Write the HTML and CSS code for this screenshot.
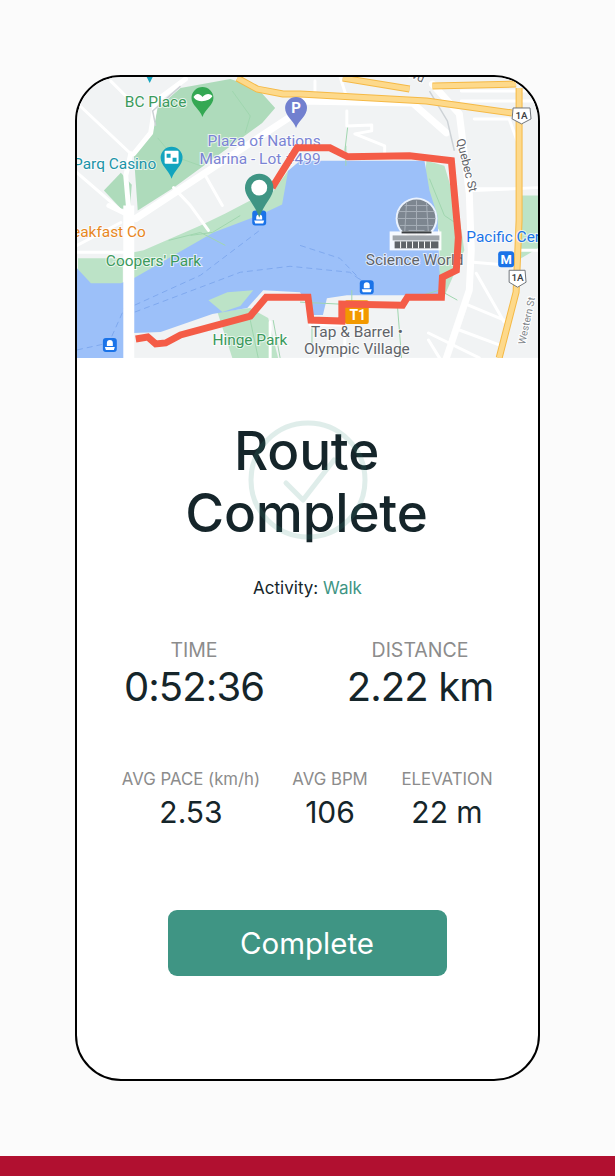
FILE: index.html
```html
<!DOCTYPE html>
<html>
<head>
    <link rel="stylesheet" href="styles.css">
</head>
<body>
<div class="page">
    <div class="phone">
        <svg class="map" viewBox="76 76 463 282" xmlns="http://www.w3.org/2000/svg">
            <rect x="76" y="76" width="463" height="282" fill="#f1f3f4"/>

            <!-- parks -->
            <g fill="#aedbbb">
                <path d="M133 153 153 127 157 107 180 87 230 78 257 87 275 107 262 122 173 187 137 210Z"/>
                <path d="M103 190 120 172 131 184 129 209 120 208Z"/>
            </g>
            <g fill="#bce3c7">
                <path d="M133 252 143 250 200 225 225 213 250 200 270 195 288 170 300 175 300 210 240 232 133 280Z"/>
                <path d="M77 258 122 258 122 284 90 284 77 270Z"/>
                <path d="M217 312 232 358 278 358 268 318 250 308Z"/>
                <path d="M427 160 445 165 460 215 465 250 445 296 420 298 440 270 440 230 426 210 424 190Z"/>
                <path d="M522 195 539 195 539 248 522 258Z"/>
            </g>

            <!-- water -->
            <path fill="#9cc0f9" d="M76 268 90 283 120 283 133 278 213 232 250 218 265 212 282 204 288 170 300 160 425 160 430 190 438 215 440 268 441 295 405 295 347 295 327 298 323 315 313 315 300 292 263 290 247 308 212 314 160 332 133 333 130 358 76 358Z"/>
            <path fill="#bce3c7" d="M208 300 227 292 253 290 240 306 222 312Z"/>
            <g fill="none" stroke="#7fa8ee" stroke-width="1" stroke-dasharray="6 4">
                <path d="M134 305 200 275 262 228"/>
                <path d="M134 312 240 272 290 266 350 272 368 285"/>
                <path d="M300 245 340 258 366 285"/>
                <path d="M76 350 108 343 125 305"/>
            </g>

            <!-- small park paths -->
            <g fill="none" stroke="#9fd6ae" stroke-width="1">
                <path d="M232 90 250 115 245 132"/>
                <path d="M157 137 172 155 200 165"/>
                <path d="M190 235 212 232 240 215"/>
                <path d="M168 240 200 232 225 245"/>
                <path d="M346 145 346 165M312 300 312 345"/>
                <path d="M430 178 445 215 460 225"/>
                <path d="M352 290 352 302M420 296 440 290 458 300"/>
                <path d="M300 302 340 304M398 308 402 358"/>
                <path d="M250 320 258 358M273 320 280 358"/>
                <path d="M348 125 345 150"/>
            </g>

            <!-- streets -->
            <g fill="none" stroke="#fff" stroke-linecap="round" stroke-linejoin="round">
                <g stroke-width="3">
                    <path d="M77 103 130 153M110 80 130 100M76 172 126 215"/>
                    <path d="M173 187 190 205 208 230M205 175 222 205"/>
                    <path d="M76 252 122 252M76 245 120 222"/>
                    <path d="M347 110 347 125M347 125 372 124 372 130 355 133 385 145 385 155"/>
                    <path d="M462 90 539 90M462 100 539 100M475 118 510 118 518 140M470 188 520 188M474 190 539 187"/>
                    <path d="M474 262 510 265M477 273 505 322M469 305 510 322M460 330 500 345M429 340 440 358"/>
                    <path d="M429 333 480 358M345 308 345 358M310 325 345 325M270 322 270 358"/>
                    <path d="M315 100 315 80M340 75 348 100M520 250 539 250"/>
                </g>
                <g stroke-width="5">
                    <path d="M133 153 150 132 155 100 185 78"/>
                    <path d="M130 153 125 175 128 210"/>
                </g>
                <g stroke-width="7">
                    <path d="M135 218 290 116 300 100 413 102 447 132"/>
                    <path d="M433 83 460 113 470 193 472 250 470 290 447 358"/>
                </g>
                <path stroke-width="11" stroke-linecap="butt" d="M128 205 128 358"/>
                <path stroke-width="5" d="M108 205 135 218"/>
            </g>
            <path fill="none" stroke="#cdd2d6" stroke-width="1.500" d="M155 125 152 110 180 85M430 90 448 120 455 150"/>

            <!-- highway -->
            <g fill="none" stroke-linejoin="round">
                <g stroke="#f5b945" stroke-width="7">
                    <path d="M237 77 257 88 283 93 300 93 427 100 513 112"/>
                    <path d="M343 77 410 88M433 85 517 83"/>
                    <path d="M520 87 520 220 517 292 500 358"/>
                </g>
                <g stroke="#fdd98b" stroke-width="5">
                    <path d="M237 77 257 88 283 93 300 93 427 100 513 112"/>
                    <path d="M343 77 410 88M433 85 517 83"/>
                    <path d="M520 87 520 220 517 292 500 358"/>
                </g>
            </g>

            <!-- shields -->
            <g class="shield">
                <path d="M514 107 531 107 532 118 522.500 123 513 118Z" fill="#fff" stroke="#70757a"/>
                <text x="522.500" y="118">1A</text>
                <path d="M510 270 526 270 527 282 518.500 287 510 282Z" fill="#fff" stroke="#70757a"/>
                <text x="518.500" y="281">1A</text>
            </g>

            <!-- science world -->
            <circle cx="417" cy="218" r="21" fill="#fff" opacity="0.8"/>
            <circle cx="417" cy="218" r="19" fill="#7d8690"/>
            <g stroke="#a7afb8" stroke-width="1" fill="none">
                <path d="M399 211 435 211M398 218 436 218M400 225 434 225M405 205 429 205M409 230 425 230"/>
                <path d="M407 202 405 234M417 200 417 236M427 202 429 234"/>
            </g>
            <rect x="390" y="231" width="52" height="19" fill="#fff" opacity="0.9"/>
            <rect x="402" y="231" width="30" height="2" fill="#3c4043"/>
            <rect x="393" y="235" width="47" height="5" fill="#a0a6ac"/>
            <rect x="395" y="241" width="44" height="7" fill="#5f6368"/>
            <g stroke="#fff" stroke-width="1">
                <path d="M401 241 401 248M407 241 407 248M413 241 413 248M419 241 419 248M425 241 425 248M431 241 431 248"/>
            </g>

            <!-- labels -->
            <g class="label">
                <text class="park" x="124" y="106">BC Place</text>
                <text class="lilac" x="207" y="145">Plaza of Nations</text>
                <text class="lilac" x="199" y="163">Marina - Lot #499</text>
                <text class="cyan" x="72" y="168">Parq Casino</text>
                <text class="food" x="71" y="237">eakfast Co</text>
                <text class="park" x="105" y="266">Coopers' Park</text>
                <text class="grey" x="366" y="265">Science World</text>
                <text class="metro" x="467" y="242">Pacific Cen</text>
                <text class="park" x="212" y="345">Hinge Park</text>
                <text class="grey" x="311" y="337">Tap &amp; Barrel •</text>
                <text class="grey" x="304" y="354">Olympic Village</text>
            </g>
            <text class="road" transform="translate(457 139) rotate(76)">Quebec St</text>
            <text class="road" transform="translate(402 72) rotate(25)">Blvd</text>
            <text class="road small" transform="translate(526 345) rotate(-78)">Western St</text>

            <!-- map pins -->
            <path fill="#34a853" d="M202 86a11 11 0 0 1 11 11c0 7-8 11-11 19-3-8-11-12-11-19a11 11 0 0 1 11-11Z"/>
            <path fill="#fff" d="M193 96c3-5 7-3 9 0 3-4 8-4 10-1-2 5-15 8-19 1Z"/>
            <path fill="#7280cf" d="M296 96a11 11 0 0 1 11 11c0 8-8 12-11 20-3-8-11-12-11-20a11 11 0 0 1 11-11Z"/>
            <text class="pin-letter" x="296" y="112">P</text>
            <path fill="#12a4be" d="M171 146a11 11 0 0 1 11 11c0 8-8 12-11 21-3-9-11-13-11-21a11 11 0 0 1 11-11Z"/>
            <rect x="164" y="150" width="14" height="13" rx="1" fill="#fff"/>
            <path fill="#12a4be" d="M166 153 170 153 170 157 166 157ZM172 157 176 157 176 161 172 161Z"/>
            <path fill="#12a4be" d="M146 76h6l-3 6Z"/>

            <!-- ferry / metro / transit markers -->
            <g class="ferry">
                <rect x="102" y="338" width="14" height="14" rx="3"/>
                <path d="M106 346v-3a3 3 0 0 1 6 0v3ZM104 347h10l-1 3h-8Z"/>
                <rect x="360" y="280" width="14" height="14" rx="3"/>
                <path d="M364 288v-3a3 3 0 0 1 6 0v3ZM362 289h10l-1 3h-8Z"/>
                <rect x="252" y="210" width="14" height="15" rx="3"/>
                <path d="M256 219v-2a3 3 0 0 1 6 0v2ZM254 220h10l-1 3h-8Z"/>
            </g>
            <rect x="499" y="251" width="16" height="16" rx="3" fill="#1a73e8"/>
            <text class="metro-letter" x="507" y="264">M</text>
            <rect x="345" y="300" width="24" height="24" rx="2" fill="#f29900"/>
            <text class="transit-letter" x="358" y="320">T1</text>

            <!-- route -->
            <path fill="none" stroke="#f45c47" stroke-width="7" stroke-linejoin="miter" d="M135 339 147 337 155 344 165 343 180 335 250 316 266 297 308 297 311 320 342 321 342 304 403 305 408 297 442 297 443 277 457 270 459 237 452 160 410 155 348 156 330 147 297 147 272 187"/>

            <!-- current position -->
            <path fill="#3f9584" d="M259 173a14.300 14.300 0 0 1 14.300 14.300c0 9-9.300 15-14.300 30-5-15-14.300-21-14.300-30a14.300 14.300 0 0 1 14.300-14.300Z"/>
            <circle cx="259" cy="187" r="8" fill="#fff"/>
        </svg>

        <div class="summary">
            <svg class="check" viewBox="0 0 124 124" xmlns="http://www.w3.org/2000/svg">
                <circle cx="62" cy="62" r="57" fill="none" stroke="#3f9584" stroke-width="5"/>
                <path d="M40 65 57 82 88 42" fill="none" stroke="#3f9584" stroke-width="5" stroke-linecap="round" stroke-linejoin="round"/>
            </svg>
            <h1>Route<br>Complete</h1>
            <p class="activity">Activity: <span>Walk</span></p>

            <div class="stats-main">
                <div class="stat">
                    <div class="stat-label">TIME</div>
                    <div class="stat-value">0:52:36</div>
                </div>
                <div class="stat">
                    <div class="stat-label">DISTANCE</div>
                    <div class="stat-value">2.22 km</div>
                </div>
            </div>

            <div class="stats-small">
                <div class="stat">
                    <div class="stat-label">AVG PACE (km/h)</div>
                    <div class="stat-value">2.53</div>
                </div>
                <div class="stat">
                    <div class="stat-label">AVG BPM</div>
                    <div class="stat-value">106</div>
                </div>
                <div class="stat">
                    <div class="stat-label">ELEVATION</div>
                    <div class="stat-value">22 m</div>
                </div>
            </div>

            <button class="complete-btn">Complete</button>
        </div>
    </div>
</div>
<footer class="band"></footer>
</body>
</html>
```

FILE: styles.css
```css
* {
    box-sizing: border-box;
}

body {
    font-family: Inter, "Liberation Sans", sans-serif;
    margin: 0;
    height: 1176px;
    display: flex;
    flex-direction: column;
    background-color: #fbfbfb;
    color: #15252a;
    overflow: hidden;
}

.page {
    flex: 1;
    padding: 75px 0 0 75px;
}

.phone {
    width: 465px;
    height: 1006px;
    background-color: #fff;
    border: 2px solid #000;
    border-radius: 46px;
    overflow: hidden;
}

.map {
    display: block;
    width: 461px;
    height: 281px;
}

.map text {
    font-family: Roboto, "Liberation Sans", sans-serif;
}

.label text {
    font-size: 15.5px;
    paint-order: stroke;
    stroke: #fff;
    stroke-width: 2px;
    stroke-opacity: 0.7;
}

.label .park { fill: #3b9a5c; }
.label .lilac { fill: #7a84d4; }
.label .cyan { fill: #1b94a8; }
.label .food { fill: #e8871e; }
.label .grey { fill: #5f6368; }
.label .metro { fill: #1a73e8; }

.road {
    font-size: 12px;
    fill: #5f6368;
    paint-order: stroke;
    stroke: #fff;
    stroke-width: 2px;
}

.road.small {
    font-size: 10px;
    fill: #80868b;
}

.shield text {
    font-size: 10px;
    font-weight: 500;
    text-anchor: middle;
    fill: #3c4043;
}

.ferry rect {
    fill: #1a73e8;
}

.ferry path {
    fill: #fff;
}

.pin-letter,
.metro-letter,
.transit-letter {
    font-weight: 700;
    text-anchor: middle;
    fill: #fff;
}

.pin-letter {
    font-size: 15px;
}

.metro-letter {
    font-size: 13px;
}

.transit-letter {
    font-size: 14px;
}

.summary {
    position: relative;
    padding-top: 62px;
    text-align: center;
}

.check {
    position: absolute;
    left: 168.5px;
    top: 60px;
    width: 124px;
    height: 124px;
    opacity: 0.16;
}

h1 {
    margin: 0 0 0 -2px;
    font-size: 53px;
    font-weight: 450;
    line-height: 62px;
    letter-spacing: -0.2px;
}

.activity {
    margin: 34px 0 0;
    font-size: 17px;
    line-height: 20px;
}

.activity span {
    color: #3f9584;
}

.stats-main {
    display: grid;
    grid-template-columns: 226px 226px;
    margin: 41px 0 0 4px;
}

.stats-main .stat-label {
    font-size: 19.5px;
    line-height: 22px;
}

.stats-main .stat-value {
    font-size: 40px;
    line-height: 52px;
    letter-spacing: -0.9px;
}

.stats-small {
    display: grid;
    grid-template-columns: 162px 116px 118px;
    margin: 56px 0 0 33px;
}

.stats-small .stat-label {
    font-size: 16.8px;
    line-height: 20px;
}

.stats-small .stat-value {
    font-size: 30px;
    line-height: 46px;
}

.stat-label {
    color: #8c8c8c;
}

.complete-btn {
    display: block;
    width: 279px;
    height: 66px;
    margin: 75px 0 0 90.5px;
    border: none;
    border-radius: 9px;
    background-color: #3f9584;
    color: #fff;
    font-family: inherit;
    font-size: 29.5px;
}

.band {
    height: 20px;
    background-color: #b11030;
}
```
